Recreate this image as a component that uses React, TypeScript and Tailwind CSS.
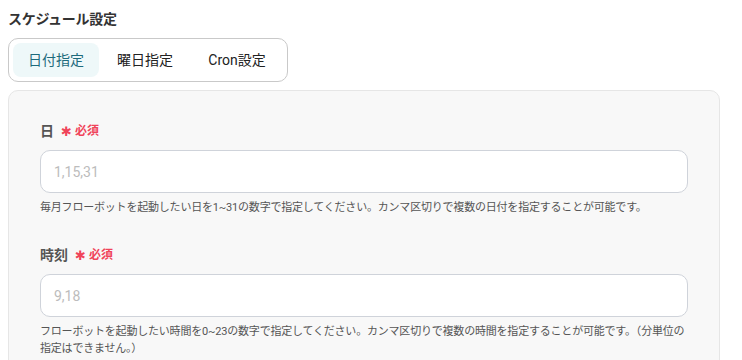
export default function App() {
  const font = { fontFamily: 'Roboto, "Noto Sans CJK JP", sans-serif' };
  return (
    <div className="min-h-screen bg-white pl-2 pr-[22px] pt-[9px] text-[#333]" style={font}>
      <h2 className="text-[14px] font-bold leading-5 tracking-[-0.3px] text-[#333]">スケジュール設定</h2>

      <div className="mt-[9px] inline-flex items-center gap-0 rounded-[10px] border border-[#c9c9c9] bg-white p-[4px]">
        <button className="h-[34px] w-[86px] rounded-[8px] bg-[#eef8f9] text-[14px] text-[#1d6b7c]">日付指定</button>
        <button className="h-[34px] w-[92px] rounded-[8px] text-[14px] text-[#222]">曜日指定</button>
        <button className="h-[34px] w-[92px] rounded-[8px] text-[14px] text-[#222]">Cron設定</button>
      </div>

      <div className="mt-[8px] h-[300px] rounded-[10px] border border-[#e6e6e6] bg-[#f8f8f8] px-[31px] pt-[30px]">
        <Field label="日" placeholder="1,15,31" help="毎月フローボットを起動したい日を1~31の数字で指定してください。カンマ区切りで複数の日付を指定することが可能です。" />
        <div className="h-[29px]" />
        <Field label="時刻" placeholder="9,18" help="フローボットを起動したい時間を0~23の数字で指定してください。カンマ区切りで複数の時間を指定することが可能です。（分単位の指定はできません。）" />
      </div>
    </div>
  );
}

function Field({ label, placeholder, help }: { label: string; placeholder: string; help: string }) {
  return (
    <div>
      <div className="flex items-center gap-[7px] leading-5">
        <span className="text-[14px] font-bold text-[#555]">{label}</span>
        <span className="flex items-center gap-[3px] text-[12px] font-bold text-[#f0445a]">
          <span className="text-[13px] leading-none" style={{ fontFamily: '"DejaVu Sans", sans-serif' }}>✱</span>
          必須
        </span>
      </div>
      <input
        placeholder={placeholder}
        className="mt-[9px] block h-[43px] w-full rounded-[10px] border border-[#cfd3da] bg-white px-[13px] text-[14px] text-[#333] outline-none placeholder:text-[#bcbcbc]"
      />
      <p className="mt-[6px] text-[11px] leading-[17px] tracking-[-0.2px] text-[#555]">{help}</p>
    </div>
  );
}
